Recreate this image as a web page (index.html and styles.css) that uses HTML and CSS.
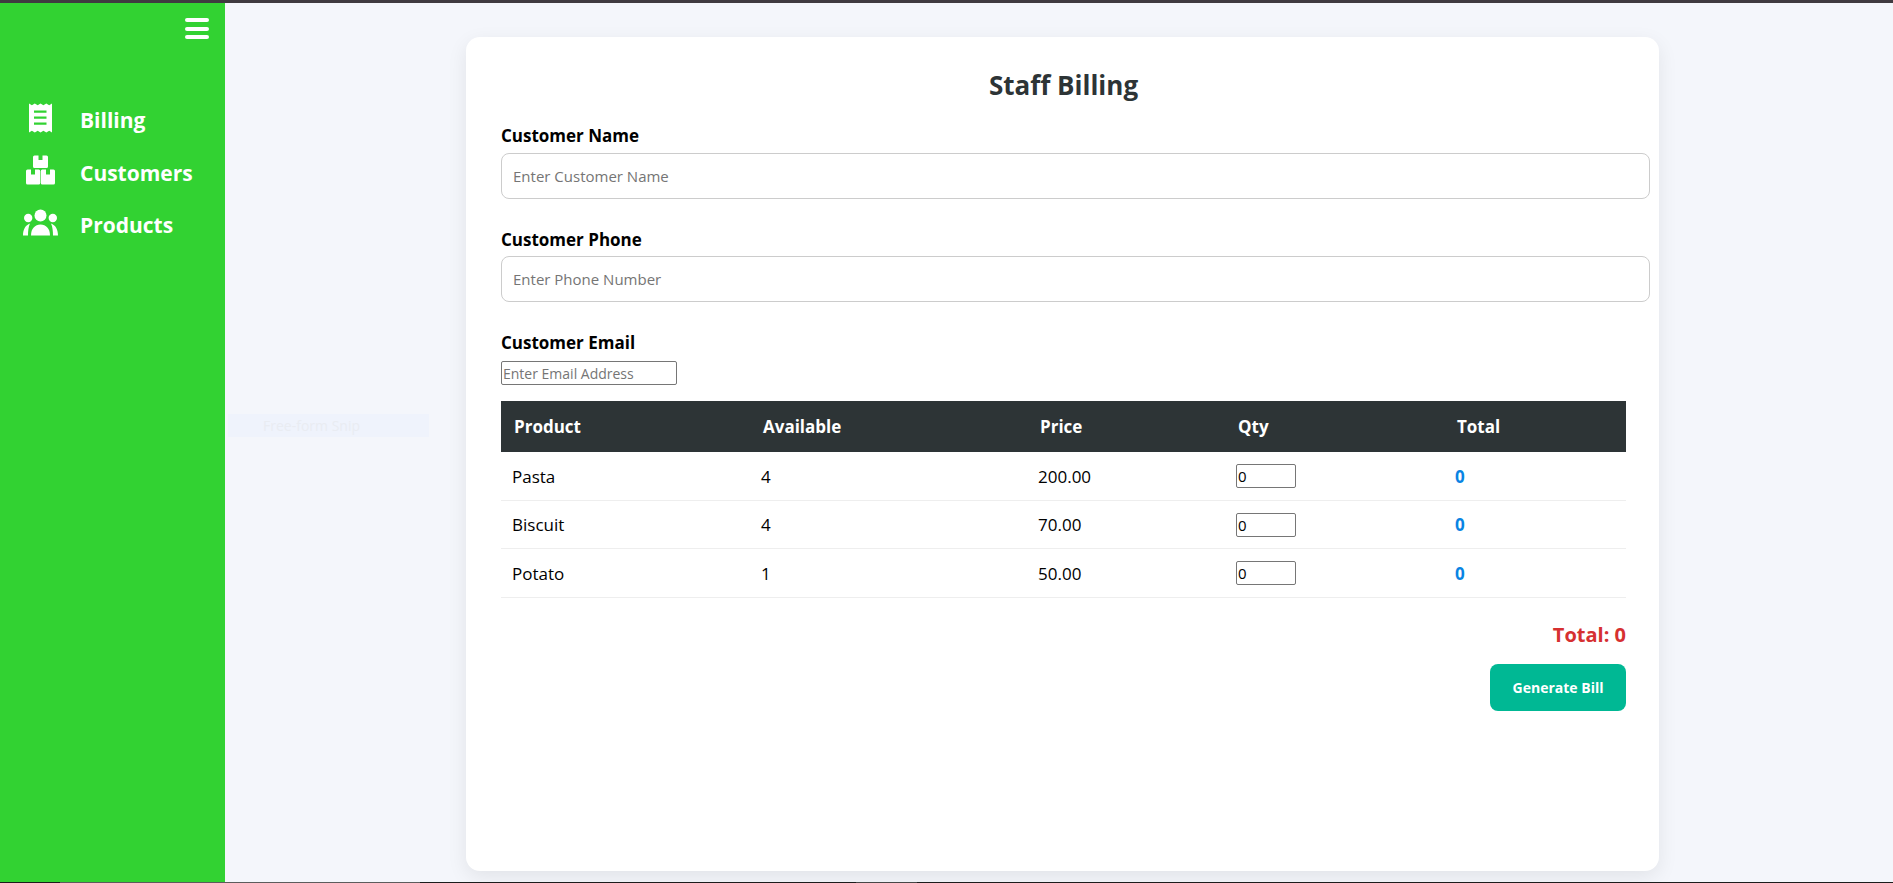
FILE: index.html
```html
<!DOCTYPE html>
<html lang="en">
<head>
  <meta charset="UTF-8" />
  <title>Staff Billing</title>
  <link rel="stylesheet" href="styles.css">
</head>
<body>
  <div class="topline"></div>
  <div class="layout">
    <aside class="sidebar">
      <div class="burger"><span></span><span></span><span></span></div>
      <nav class="menu">
        <a class="menu-item" href="#">
          <svg class="menu-icon" viewBox="0 0 40 30">
            <path fill="#fff" fill-rule="evenodd" d="M9 .5l2.900 1.800 2.900-1.800 2.900 1.800 2.800-1.800 2.900 1.800 2.900-1.800 2.900 1.800L32 .5v29l-2.800-1.800-2.900 1.800-2.900-1.800-2.900 1.800-2.800-1.800-2.900 1.800-2.900-1.800L9 29.500z M14 7.500v2.200h12.500V7.500z M14 13.500v2.200h12.500v-2.200z M14 19.500v2.200h12.500v-2.200z"/>
          </svg>
          <span>Billing</span>
        </a>
        <a class="menu-item" href="#">
          <svg class="menu-icon" viewBox="0 0 40 30">
            <path fill="#fff" d="M14.500 .5h4v4.500h4V.5h4A1.500 1.500 0 0 1 28 2v9.500a1.500 1.500 0 0 1-1.500 1.500h-12a1.500 1.500 0 0 1-1.500-1.500V2A1.500 1.500 0 0 1 14.500 .5z"/>
            <path fill="#fff" d="M7.500 14.500H11v5h4v-5h3.700a1.500 1.500 0 0 1 1.500 1.500v12a1.500 1.500 0 0 1-1.500 1.500H7.500A1.500 1.500 0 0 1 6 28V16a1.500 1.500 0 0 1 1.500-1.500z"/>
            <path fill="#fff" d="M22.300 14.500H26v5h4v-5h3.500A1.500 1.500 0 0 1 35 16v12a1.500 1.500 0 0 1-1.500 1.500H22.300a1.500 1.500 0 0 1-1.500-1.500V16a1.500 1.500 0 0 1 1.500-1.500z"/>
          </svg>
          <span>Customers</span>
        </a>
        <a class="menu-item" href="#">
          <svg class="menu-icon" viewBox="0 0 40 30">
            <circle fill="#fff" cx="20.500" cy="7.500" r="6"/>
            <circle fill="#fff" cx="8.200" cy="10" r="4.200"/>
            <circle fill="#fff" cx="32.800" cy="10" r="4.200"/>
            <path fill="#fff" d="M11 27.500c0-7 4-11 9.500-11s9.500 4 9.500 11z"/>
            <path fill="#fff" d="M3 27.500C3 21.500 5.500 17 10 15.500 8.500 18.500 8 23 8 27.500z"/>
            <path fill="#fff" d="M38 27.500C38 21.500 35.500 17 31 15.500c1.500 3 2 7.500 2 12z"/>
          </svg>
          <span>Products</span>
        </a>
      </nav>
    </aside>

    <main class="content">
      <section class="card">
        <h2>Staff Billing</h2>

        <label class="field-label">Customer Name</label>
        <input class="field" type="text" placeholder="Enter Customer Name" />

        <label class="field-label phone-label">Customer Phone</label>
        <input class="field" type="text" placeholder="Enter Phone Number" />

        <label class="field-label email-label">Customer Email</label>
        <input class="plain" type="email" placeholder="Enter Email Address" />

        <table class="bill">
          <thead>
            <tr>
              <th class="col-product">Product</th>
              <th class="col-available">Available</th>
              <th class="col-price">Price</th>
              <th class="col-qty">Qty</th>
              <th>Total</th>
            </tr>
          </thead>
          <tbody>
            <tr>
              <td>Pasta</td><td>4</td><td>200.00</td>
              <td><input class="qty" type="text" value="0" /></td>
              <td class="line-total">0</td>
            </tr>
            <tr>
              <td>Biscuit</td><td>4</td><td>70.00</td>
              <td><input class="qty" type="text" value="0" /></td>
              <td class="line-total">0</td>
            </tr>
            <tr>
              <td>Potato</td><td>1</td><td>50.00</td>
              <td><input class="qty" type="text" value="0" /></td>
              <td class="line-total">0</td>
            </tr>
          </tbody>
        </table>

        <div class="grand-total">Total: 0</div>
        <div class="actions">
          <button class="generate" type="button">Generate Bill</button>
        </div>
      </section>
    </main>
  </div>
  <div class="taskbar">
    <span class="task-gap first"></span>
    <span class="task-open first"></span>
    <span class="task-gap second"></span>
    <span class="task-open second"></span>
    <span class="task-gap rest"></span>
  </div>
  <div class="snip-ghost">Free-form Snip</div>
</body>
</html>
```

FILE: styles.css
```css
* {
  box-sizing: border-box;
}
html, body {
  height: 100%;
}
body {
  margin: 0;
  font-family: 'Open Sans', 'Noto Sans', sans-serif;
  background: #f4f6fb;
  display: flex;
  flex-direction: column;
  height: 883px;
  overflow: hidden;
}
.topline {
  height: 3px;
  background: #3f3a40;
}
.layout {
  flex: 1;
  display: flex;
  min-height: 0;
}

/* the sliver of the OS taskbar at the bottom */
.taskbar {
  height: 1px;
  display: flex;
  background: #1c1c1c;
}
.task-gap.first { width: 60px; }
.task-open.first { width: 360px; background: #5c5c5c; }
.task-gap.second { width: 436px; }
.task-open.second { width: 61px; background: #474747; }
.task-gap.rest { flex: 1; }

/* sidebar */
.sidebar {
  width: 225px;
  background: #32d232;
  color: white;
}
.burger {
  width: 24px;
  height: 21px;
  margin: 15px 16px 0 auto;
  display: flex;
  flex-direction: column;
  justify-content: space-between;
}
.burger span {
  height: 4px;
  background: white;
  border-radius: 2px;
}
.menu {
  margin-top: 55px;
}
.menu-item {
  display: flex;
  align-items: center;
  height: 52.500px;
  color: white;
  text-decoration: none;
  font-size: 21px;
  font-weight: 700;
}
.menu-icon {
  width: 40px;
  height: 30px;
  margin: 0 20px 5px 20px;
}

/* card */
.content {
  flex: 1;
  padding: 34px 0 0 241px;
}
.card {
  width: 1193px;
  height: 834px;
  background: white;
  padding: 30px 33px 0 35px;
  border-radius: 14px;
  box-shadow: 0 6px 20px rgba(0,0,0,0.08);
}
h2 {
  margin: 0 0 21px;
  font-size: 26px;
  line-height: 36px;
  text-align: center;
  color: #2d3436;
}
.field-label {
  display: block;
  font-size: 17px;
  line-height: 24px;
  font-weight: 700;
  color: black;
  margin-bottom: 5px;
}
.phone-label {
  margin-top: 29px;
  margin-bottom: 4px;
}
.email-label {
  margin-top: 29px;
  margin-bottom: 6px;
}
.field {
  display: block;
  width: calc(100% + 24px);
  height: 46px;
  padding: 0 11px;
  margin-bottom: 28px;
  border: 1px solid #ccc;
  border-radius: 8px;
  font-family: inherit;
  font-size: 15px;
}
.plain {
  display: block;
  width: 176px;
  height: 24px;
  padding: 1px;
  border: 1px solid #767676;
  border-radius: 2px;
  font-family: inherit;
  font-size: 14px;
}

/* table */
.bill {
  width: 100%;
  margin-top: 16px;
  border-collapse: collapse;
  table-layout: fixed;
}
.bill th {
  height: 51px;
  padding: 0 13px;
  background: #2d3436;
  color: white;
  text-align: left;
  font-size: 17px;
}
.bill td {
  height: 48px;
  padding: 1px 11px 0;
  border-bottom: 1px solid #eee;
  font-size: 17px;
  color: black;
}
.bill tbody tr:last-child td {
  height: 49px;
}
.col-product { width: 249px; }
.col-available { width: 277px; }
.col-price { width: 198px; }
.col-qty { width: 219px; }
.bill td.line-total {
  color: #0984e3;
  font-weight: 700;
}
.qty {
  display: block;
  width: 60px;
  height: 24px;
  padding: 1px;
  border: 1px solid #767676;
  border-radius: 2px;
  font-family: inherit;
  font-size: 15px;
}
.grand-total {
  margin-top: 23px;
  text-align: right;
  font-size: 20px;
  line-height: 28px;
  font-weight: 700;
  color: #d63031;
}
.actions {
  margin-top: 15px;
  text-align: right;
}
.generate {
  width: 136px;
  height: 47px;
  background-color: #00b894;
  color: white;
  border: none;
  border-radius: 8px;
  font-family: inherit;
  font-size: 14px;
  font-weight: 700;
}

/* leftover of the snipping tool tooltip, faint over the page */
.snip-ghost {
  position: absolute;
  left: 228px;
  top: 414px;
  width: 201px;
  height: 23px;
  padding-left: 35px;
  background: #eff3fc;
  color: #e9ecf2;
  font-size: 14px;
  line-height: 23px;
}
```
